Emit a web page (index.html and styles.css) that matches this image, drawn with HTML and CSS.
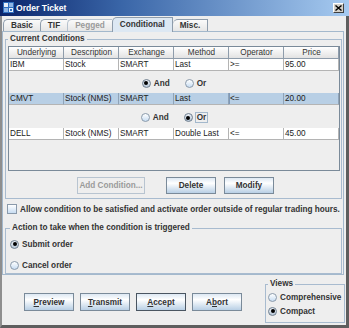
FILE: index.html
```html
<!DOCTYPE html>
<html lang="en">
<head>
    <meta charset="UTF-8">
    <title>Order Ticket</title>
    <link rel="stylesheet" href="styles.css">
</head>
<body>
<div class="window">
    <div class="titlebar">
        <svg class="app-icon" viewBox="0 0 11 11">
            <rect width="11" height="11" fill="#2f6fc0"/>
            <rect x="1" y="1" width="4" height="4" fill="#e8f0fa"/>
            <rect x="6" y="1" width="4" height="4" fill="#8fb6e6"/>
            <rect x="1" y="6" width="4" height="4" fill="#8fb6e6"/>
            <rect x="6" y="6" width="4" height="4" fill="#e8f0fa"/>
            <rect x="7" y="7" width="2" height="2" fill="#2f6fc0"/>
        </svg>
        <span class="title">Order Ticket</span>
        <span class="close-btn">
            <svg viewBox="0 0 7 6" width="7" height="6">
                <path d="M0.5 0.5 L6.5 5.5 M6.5 0.5 L0.5 5.5" stroke="#000" stroke-width="1.4"/>
            </svg>
        </span>
    </div>

    <div class="frame">
        <div class="tabs">
            <div class="tab">Basic</div>
            <div class="tab">TIF</div>
            <div class="tab disabled">Pegged</div>
            <div class="tab selected">Conditional</div>
            <div class="tab last">Misc.</div>
        </div>

        <div class="tab-panel">
            <fieldset class="group conditions">
                <legend>Current Conditions</legend>
                <div class="table">
                    <div class="row header">
                        <div>Underlying</div><div>Description</div><div>Exchange</div>
                        <div>Method</div><div>Operator</div><div>Price</div>
                    </div>
                    <div class="row">
                        <div>IBM</div><div>Stock</div><div>SMART</div>
                        <div>Last</div><div>&gt;=</div><div>95.00</div>
                    </div>
                    <div class="conj first">
                        <span class="opt"><span class="radio on"></span>And</span>
                        <span class="opt"><span class="radio"></span>Or</span>
                    </div>
                    <div class="row selected">
                        <div>CMVT</div><div>Stock (NMS)</div><div>SMART</div>
                        <div>Last</div><div class="focus">&lt;=</div><div>20.00</div>
                    </div>
                    <div class="conj">
                        <span class="opt"><span class="radio"></span>And</span>
                        <span class="opt"><span class="radio on"></span><span class="focus-text">Or</span></span>
                    </div>
                    <div class="row">
                        <div>DELL</div><div>Stock (NMS)</div><div>SMART</div>
                        <div>Double Last</div><div>&lt;=</div><div>45.00</div>
                    </div>
                </div>
                <div class="btn-row">
                    <button class="btn wide" disabled>Add Condition...</button>
                    <button class="btn">Delete</button>
                    <button class="btn">Modify</button>
                </div>
            </fieldset>

            <div class="check-row">
                <span class="checkbox"></span>
                <span>Allow condition to be satisfied and activate order outside of regular trading hours.</span>
            </div>

            <fieldset class="group action">
                <legend>Action to take when the condition is triggered</legend>
                <div class="radio-line"><span class="radio on"></span>Submit order</div>
                <div class="radio-line"><span class="radio"></span>Cancel order</div>
            </fieldset>
        </div>

        <div class="footer">
            <div class="actions">
                <button class="btn big"><u>P</u>review</button>
                <button class="btn big"><u>T</u>ransmit</button>
                <button class="btn big default"><u>A</u>ccept</button>
                <button class="btn big">A<u>b</u>ort</button>
            </div>
            <fieldset class="group views">
                <legend>Views</legend>
                <div class="radio-line"><span class="radio"></span>Comprehensive</div>
                <div class="radio-line"><span class="radio on"></span>Compact</div>
            </fieldset>
        </div>
    </div>
</div>
</body>
</html>
```

FILE: styles.css
```css
* {
    box-sizing: border-box;
}

body {
    margin: 0;
    background: #eeeeee;
    font-family: "Liberation Sans", Arial, sans-serif;
    font-size: 8.2px;
    font-weight: bold;
    color: #333;
}

.window {
    width: 349px;
    height: 328px;
    display: flex;
    flex-direction: column;
    background: #eeeeee;
}

/* title bar */
.titlebar {
    flex: none;
    height: 16px;
    display: flex;
    align-items: center;
    padding: 0 3px 1px 3px;
    background: linear-gradient(to right, #0a246a, #3a66a8 35%, #a6caf0);
}

.app-icon {
    width: 11px;
    height: 11px;
    margin-right: 2px;
}

.title {
    flex: 1;
    color: #fff;
    font-size: 8.6px;
}

.close-btn {
    width: 11px;
    height: 10px;
    margin-right: 2px;
    display: flex;
    align-items: center;
    justify-content: center;
    background: #d4d0c8;
    border: 1px solid;
    border-color: #fff #404040 #404040 #fff;
}

.frame {
    flex: 1;
    display: flex;
    flex-direction: column;
    border-left: 2px solid #8e8e8e;
    border-right: 3px solid #5e5e5e;
    border-bottom: 3px solid #5e5e5e;
}

/* tabs */
.tabs {
    height: 15px;
    display: flex;
    align-items: flex-end;
    padding-left: 1px;
}

.tab {
    height: 12px;
    padding: 0 7px;
    line-height: 11px;
    border: 1px solid #8e9cab;
    border-bottom: none;
    border-right: none;
    border-top-left-radius: 5px;
    background: linear-gradient(#fafafa, #e6e6e6);
}

.tab.disabled {
    color: #9a9a9a;
    border-color: #b6c2ce;
}

.tab.selected {
    height: 15px;
    margin-bottom: -1px;
    line-height: 13px;
    position: relative;
    z-index: 1;
    border-right: 1px solid #8e9cab;
    background: #dde8f3;
}

.tab.selected + .tab {
    border-left: none;
}

.tab.last {
    border-right: 1px solid #8e9cab;
}

.tab-panel {
    height: 244px;
    margin-right: 2px;
    border: 1px solid #a3b8cc;
    display: flex;
    flex-direction: column;
}

/* titled groups */
.group {
    margin: 0;
    border: 1px solid #a8bbcf;
    min-width: 0;
}

.group legend {
    padding: 0 2px;
    line-height: 10px;
}

.conditions {
    margin: 2px 1px 0 2px;
    padding: 2px 1px 4px 2px;
}

/* table */
.table {
    height: 125px;
    width: 332px;
    border: 1px solid #7a8a99;
    background: #eeeeee;
}

.row {
    display: grid;
    grid-template-columns: repeat(6, 1fr);
    height: 12px;
}

.row > div {
    padding-left: 1px;
    line-height: 11px;
    font-weight: normal;
    color: #222;
    white-space: nowrap;
    overflow: hidden;
    background: #fff;
    border-right: 1px solid #b4b4b4;
    border-bottom: 1px solid #b4b4b4;
}

.row.header > div {
    text-align: center;
    color: #333;
    background: linear-gradient(#ffffff, #e2e2e2);
    border-color: #8e9cab;
}

.row.selected > div {
    background: #b8cfe5;
    border-right-color: #8fa3b8;
}

.row.selected > .focus {
    box-shadow: inset 1px 0 0 #7d98b8;
}

.conj {
    height: 23px;
    display: flex;
    align-items: center;
    justify-content: center;
    gap: 15px;
    padding: 2px 0 0 0;
}

.conj.first {
    height: 22px;
}

.opt {
    display: flex;
    align-items: center;
    gap: 3px;
}

.focus-text {
    padding: 0 1px;
    outline: 1px solid #a3b8cc;
}

/* radios and checkboxes */
.radio {
    flex: none;
    width: 9px;
    height: 9px;
    border-radius: 50%;
    border: 1px solid #8a9aab;
    background: linear-gradient(#ffffff, #c8ddf2);
    display: flex;
    align-items: center;
    justify-content: center;
}

.radio.on {
    border-color: #6f7f8f;
    background: linear-gradient(#e9eef4, #b8c8d8);
}

.radio.on::after {
    content: "";
    width: 4px;
    height: 4px;
    border-radius: 50%;
    background: #000;
}

.checkbox {
    flex: none;
    width: 10px;
    height: 10px;
    border: 1px solid #8a9aab;
    background: linear-gradient(#ffffff, #c8ddf2);
}

/* buttons */
.btn {
    height: 17px;
    width: 50px;
    padding: 0;
    font: bold 8.2px "Liberation Sans", Arial, sans-serif;
    color: #333;
    border: 1px solid #7a8a99;
    background: linear-gradient(#dde8f3, #ffffff 35%, #b8cfe5);
}

.btn.wide {
    width: 68px;
}

.btn:disabled {
    color: #9a9a9a;
    border-color: #b8c4d0;
    background: #eeeeee;
}

.btn.big {
    height: 18px;
}

.btn.default {
    border-color: #4a5561;
}

.btn-row {
    display: flex;
    gap: 8px;
    margin-top: 6px;
    padding-left: 69px;
}

.btn-row .wide {
    margin-right: 13px;
}

/* checkbox line */
.check-row {
    display: flex;
    align-items: center;
    gap: 3px;
    height: 10px;
    margin-top: 5px;
    padding-left: 4px;
    white-space: nowrap;
}

.action {
    margin: 9px 1px 0 2px;
    padding: 4px 3px 0 4px;
    flex: 1;
}

.radio-line {
    display: flex;
    align-items: center;
    gap: 3px;
    height: 14px;
}

.action .radio-line + .radio-line {
    margin-top: 7px;
}

/* footer */
.footer {
    flex: 1;
    display: flex;
    align-items: flex-start;
    padding-left: 22px;
}

.actions {
    display: flex;
    gap: 6px;
    margin-top: 18px;
}

.views {
    margin: 4px 1px 0 auto;
    width: 80px;
    height: 44px;
    padding: 1px 2px 0 2px;
}

.views .radio-line {
    height: 14px;
}
```
